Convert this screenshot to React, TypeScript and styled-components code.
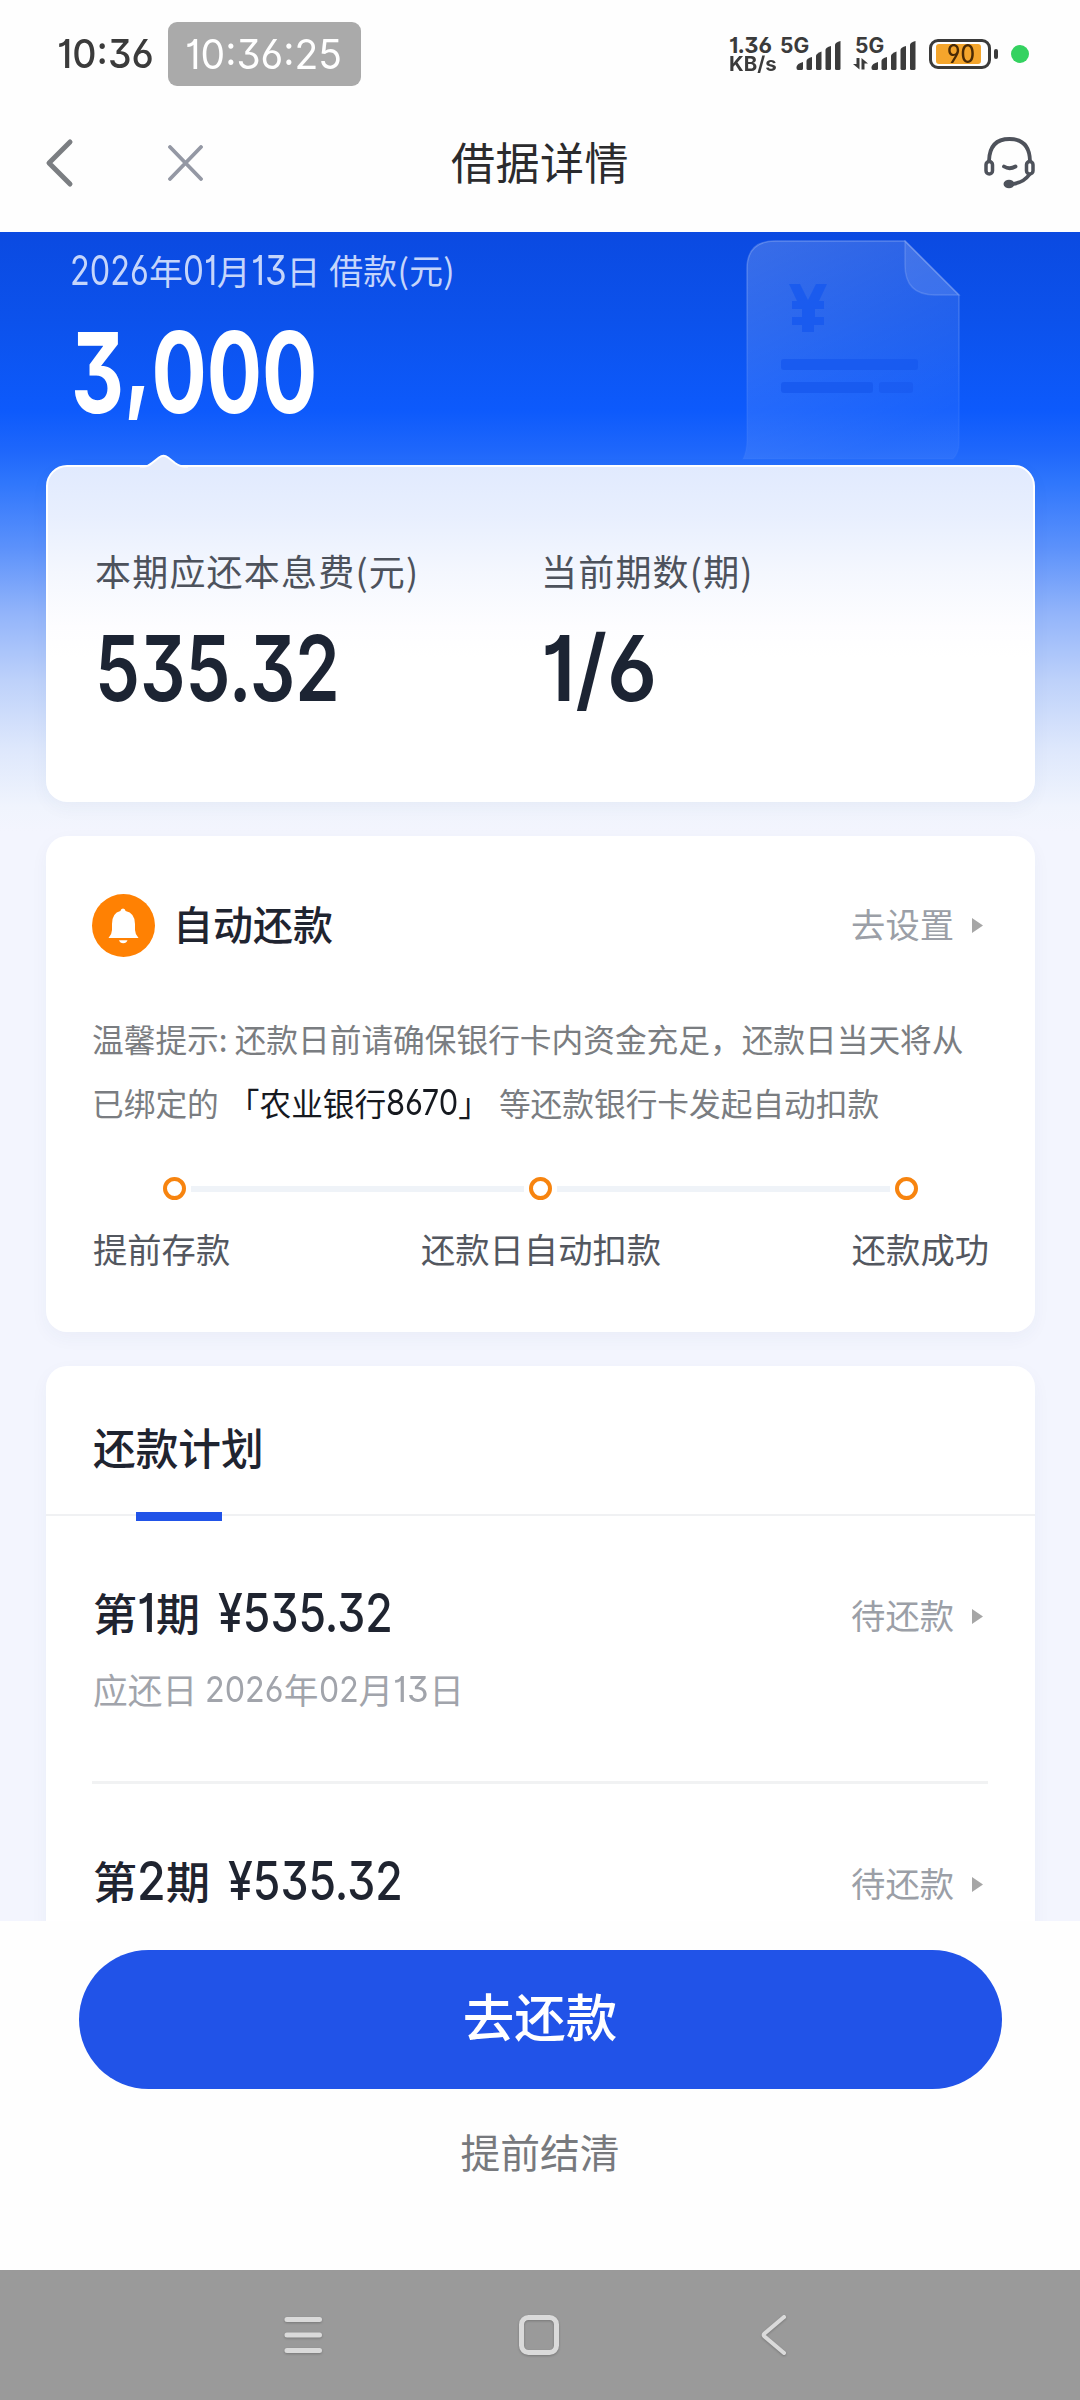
import React, { useLayoutEffect, useRef, useState } from "react";
import styled, { createGlobalStyle } from "styled-components";

const cjk = `"Noto Sans CJK SC", "Noto Sans", sans-serif`;
const latin = `Inter, Roboto, "Liberation Sans", sans-serif`;

const GlobalStyle = createGlobalStyle`
  html, body { margin: 0; padding: 0; background: #fefefe; }
  *, *::before, *::after { box-sizing: border-box; }
  body { font-family: ${cjk}; -webkit-font-smoothing: antialiased; }
  button { font: inherit; border: 0; padding: 0; background: none; cursor: pointer; }
  svg { display: block; flex: none; }
`;

/* ---------- condensed numerals ---------- */

const NumBox = styled.span<{ $w: number; $size: number; $weight: number }>`
  display: inline-block;
  flex: none;
  width: ${(p) => p.$w}px;
  height: ${(p) => p.$size * 0.73}px;
  line-height: ${(p) => p.$size * 0.73}px;
  font-family: ${latin};
  font-size: ${(p) => p.$size}px;
  font-weight: ${(p) => p.$weight};
  font-feature-settings: "cv01", "cv03", "cv04", "cv09";
  white-space: pre;
`;

const NumInk = styled.span`
  display: inline-block;
  transform-origin: 0 50%;
`;

const Comma = styled.span`
  display: inline-block;
  transform: translateY(-15px);
`;

interface NumProps {
  width: number;
  size: number;
  weight?: number;
  children: React.ReactNode;
}

/** Numerals squeezed horizontally to an exact advance width. */
function Num({ width, size, weight = 400, children }: NumProps) {
  const ink = useRef<HTMLSpanElement>(null);
  const [scale, setScale] = useState(1);
  useLayoutEffect(() => {
    if (ink.current) setScale(width / ink.current.offsetWidth);
  }, [width, children]);
  return (
    <NumBox $w={width} $size={size} $weight={weight}>
      <NumInk ref={ink} style={{ transform: `scaleX(${scale})` }}>
        {children}
      </NumInk>
    </NumBox>
  );
}

/* ---------- screen ---------- */

const Screen = styled.div`
  width: 1080px;
  height: 2400px;
  display: flex;
  flex-direction: column;
  overflow: hidden;
  background: #fefefe;
`;

const StatusBar = styled.header`
  height: 108px;
  flex: none;
  display: flex;
  align-items: center;
  padding: 0 51px 0 57px;
  color: #3b3b3b;
`;

const ClockPill = styled.div`
  margin-left: 14px;
  width: 193px;
  height: 64px;
  border-radius: 9px;
  background: #aaaaaa;
  color: #fff;
  display: flex;
  align-items: center;
  justify-content: center;
  padding: 2px 2px 0 0;
`;

const StatusRight = styled.div`
  margin-left: auto;
  display: flex;
  align-items: center;
`;

const Speed = styled.div`
  display: flex;
  flex-direction: column;
  gap: 4px;
  width: 51px;
`;

const Signal = styled.div<{ $ml?: number }>`
  position: relative;
  width: 61px;
  height: 32px;
  margin-left: ${(p) => p.$ml ?? 0}px;
  display: flex;
  align-items: flex-end;
  justify-content: flex-end;
`;

const SignalLabel = styled.span`
  position: absolute;
  left: 0;
  top: 0;
  line-height: 0;
`;

const Battery = styled.div`
  width: 62px;
  height: 30px;
  margin-left: 13px;
  border: 3px solid #3b3b3b;
  border-radius: 9px;
  padding: 2px 4px;
  display: flex;
`;

const Charge = styled.div`
  width: 45px;
  height: 20px;
  border-radius: 3px;
  background: #f4a52c;
  color: #4a2a05;
  display: flex;
  align-items: center;
  justify-content: flex-end;
  padding-right: 6px;
`;

const BatteryNub = styled.div`
  width: 4px;
  height: 10px;
  margin-left: 3px;
  border-radius: 2px;
  background: #3b3b3b;
`;

const LiveDot = styled.div`
  width: 18px;
  height: 18px;
  margin-left: 13px;
  border-radius: 50%;
  background: #34d260;
`;

const TitleBar = styled.nav`
  height: 124px;
  flex: none;
  display: grid;
  grid-template-columns: 1fr auto 1fr;
  align-items: center;
  padding: 0 45px 15px 45px;
`;

const TitleActions = styled.div<{ $end?: boolean }>`
  display: flex;
  align-items: center;
  gap: 94px;
  justify-content: ${(p) => (p.$end ? "flex-end" : "flex-start")};
`;

const Title = styled.h1`
  margin: 0;
  padding-bottom: 4px;
  font-size: 44px;
  line-height: 60px;
  letter-spacing: 0.5px;
  font-weight: 400;
  color: #2b2b2d;
`;

const Content = styled.main`
  height: 1689px;
  flex: none;
  overflow: hidden;
  padding: 0 45px 0 46px;
  background: linear-gradient(
      180deg,
      #0b4ae1 0px,
      #0c52ec 90px,
      #0d5afc 178px,
      #2068fb 222px,
      #2f76fc 250px,
      #5b91fb 315px,
      #92b4fa 381px,
      #bdd1fa 448px,
      #dde7fc 515px,
      #f0f4fd 575px,
      #f3f5fe 600px
    )
    no-repeat;
`;

const Hero = styled.section`
  height: 233px;
  display: flex;
  justify-content: space-between;
  padding: 8px 74px 0 24px;
`;

const HeroDate = styled.div`
  margin-top: 12px;
  height: 38px;
  line-height: 36px;
  font-size: 33.8px;
  color: #c5d5fb;
  white-space: pre;
  display: flex;
  align-items: center;
`;

const HeroCaption = styled.span`
  margin-left: 1px;
  height: 38px;
  letter-spacing: 0.3px;
`;

const HeroAmount = styled.div`
  margin: 42px 0 0 1px;
  height: 82px;
  line-height: 0;
  color: #fff;
`;

const shadow = `0 6px 18px rgba(40, 60, 110, 0.045)`;

const SummaryCard = styled.section`
  position: relative;
  height: 337px;
  border-radius: 21px;
  border: 2px solid #fff;
  background: linear-gradient(180deg, #e1eafe 0px, #e8effe 50px, #f4f7fe 105px, #fdfdff 160px, #fff 190px);
  box-shadow: ${shadow};
  padding: 79px 0 0 47px;
  display: grid;
  grid-template-columns: 446px 1fr;
  align-content: start;
`;

const Notch = styled.svg`
  position: absolute;
  left: 92px;
  top: -13px;
`;

const SummaryLabel = styled.div`
  height: 48px;
  line-height: 48px;
  font-size: 36px;
  letter-spacing: 1.2px;
  color: #4d525c;
  white-space: nowrap;
`;

const SummaryValue = styled.div`
  margin-top: 41px;
  height: 66px;
  line-height: 0;
  color: #1c2433;
`;

const Card = styled.section<{ $h: number }>`
  height: ${(p) => p.$h}px;
  margin-top: 34px;
  border-radius: 21px;
  background: #fff;
  box-shadow: ${shadow};
  display: flex;
  flex-direction: column;
`;

const CardHead = styled.div`
  display: flex;
  align-items: center;
  height: 64px;
  margin: 57px 47px 0 46px;
`;

const CardTitle = styled.h2`
  margin: 0 0 0 18px;
  font-size: 40px;
  line-height: 64px;
  height: 68px;
  font-weight: 500;
  color: #1f2430;
`;

const LinkAction = styled.button<{ $drop?: number }>`
  margin-left: auto;
  display: flex;
  align-items: center;
  gap: 18px;
  padding-right: 5px;
  padding-top: ${(p) => p.$drop ?? 0}px;
  font-size: 34.3px;
  font-weight: 400;
  line-height: 50px;
  color: #9b9fa7;
`;

const LinkText = styled.span`
  margin-top: -4px;
`;

const Hint = styled.div`
  margin: 49px 46px 0 46px;
  font-size: 31.7px;
  line-height: 64px;
  color: #7a7d81;
  white-space: nowrap;
`;

const HintLine = styled.p`
  display: flex;
  align-items: center;
  height: 64px;
  margin: 0;
  white-space: pre;
`;

const BankName = styled.span<{ $l: number; $r: number }>`
  display: flex;
  align-items: center;
  color: #16191f;
  margin: 0 ${(p) => p.$r}px 0 ${(p) => p.$l}px;
`;

const Track = styled.div`
  height: 23px;
  margin: 43px 117px 0;
  display: flex;
  align-items: center;
  gap: 5px;
`;

const TrackDot = styled.span`
  width: 23px;
  height: 23px;
  flex: none;
  border: 4.5px solid #f7840f;
  border-radius: 50%;
  background: #fff;
`;

const TrackLine = styled.span`
  flex: 1;
  height: 6px;
  background: #eff3f8;
`;

const TrackLabels = styled.div`
  display: flex;
  justify-content: space-between;
  margin: 23px 46px 0 47px;
  font-size: 34.3px;
  line-height: 50px;
  color: #53575f;
`;

const PlanTab = styled.div`
  height: 150px;
  flex: none;
  border-bottom: 2px solid #f0f1f3;
  display: flex;
  flex-direction: column;
  justify-content: space-between;
  padding: 48px 46px 0 47px;
`;

const PlanTitle = styled.h2`
  margin: 0;
  font-size: 42.7px;
  line-height: 64px;
  font-weight: 500;
  color: #1f2430;
`;

const TabMark = styled.div`
  width: 86px;
  height: 9px;
  margin: 0 0 -7px 43px;
  background: #2153e8;
`;

const PlanRow = styled.article`
  height: 268px;
  flex: none;
  margin: 0 47px 0 46px;
  padding-top: 65px;
  border-bottom: 3px solid #f1f2f3;
`;

const PlanMain = styled.div`
  display: flex;
  align-items: center;
  height: 64px;
  font-size: 44px;
  font-weight: 500;
  color: #1f2430;
`;

const Term = styled.span`
  display: flex;
  align-items: center;
  line-height: 62px;
  margin: 0 18px 0 1px;
`;

const TermText = styled.span`
  margin-top: -3px;
`;

const PlanDue = styled.div`
  margin: 21px 0 0 1px;
  height: 46px;
  line-height: 46px;
  display: flex;
  align-items: center;
  font-size: 34.7px;
  white-space: pre;
  color: #a1a4ab;
`;

const Footer = styled.footer`
  height: 349px;
  flex: none;
  padding-top: 29px;
  display: flex;
  flex-direction: column;
  align-items: center;
  background: #fefefe;
`;

const PrimaryButton = styled.button`
  width: 923px;
  height: 139px;
  border-radius: 70px;
  background: #2153e8;
  color: #fff;
  font-size: 51.5px;
  line-height: 130px;
  padding-bottom: 9px;
  font-weight: 500;
`;

const TextButton = styled.button`
  margin-top: 32px;
  font-size: 39.8px;
  line-height: 60px;
  color: #77797d;
`;

const SystemNav = styled.div`
  flex: 1;
  background: #9a9a9a;
  display: flex;
  align-items: flex-start;
  padding: 40px 0 0 280px;
  gap: 189px;
`;

/* ---------- drawings ---------- */

const Bars = () => (
  <svg width="45" height="29" viewBox="0 0 45 29" fill="#3b3b3b">
    <path d="M0.500 27V26Q1 22.500 7 21V27.500Q7 29 5.500 29H2Q0.500 29 0.500 27Z" />
    <path d="M10.500 20Q10.500 17.500 16 16V27.500Q16 29 14.500 29H12Q10.500 29 10.500 27.500Z" />
    <path d="M20 15Q20 12.500 25.500 10.500V27.500Q25.500 29 24 29H21.500Q20 29 20 27.500Z" />
    <path d="M29.500 9Q29.500 6.500 35 5V27.500Q35 29 33.500 29H31Q29.500 29 29.500 27.500Z" />
    <path d="M39 4Q39 1.500 44.500 0V27.500Q44.500 29 43 29H40.500Q39 29 39 27.500Z" />
  </svg>
);

const DataArrows = () => (
  <svg width="18" height="12" viewBox="0 0 18 12" fill="#3b3b3b">
    <path d="M3.500 0H6.500V11.500L0 6H3.500Z" />
    <path d="M8.500 0L15 5.500H11.500V11.500H8.500Z" />
  </svg>
);

const Headset = () => (
  <svg width="51" height="52" viewBox="0 0 51 52" fill="none" stroke="#4e525b" strokeWidth="3.800" strokeLinecap="round">
    <path d="M5 24Q5.500 2 25.500 2T46 24" />
    <rect x="2" y="24.500" width="6.500" height="12.500" rx="3.250" strokeWidth="3.500" />
    <rect x="42.500" y="24.500" width="6.500" height="12.500" rx="3.250" strokeWidth="3.500" />
    <path d="M20 29.500Q25.500 33 31.500 29.500" />
    <path d="M45 38Q40 45 29 47" />
    <ellipse cx="25" cy="47" rx="3.600" ry="2.400" fill="#4e525b" />
  </svg>
);

const Document = () => (
  <svg width="219" height="220" viewBox="0 0 219 220">
    <defs>
      <linearGradient id="paper" x1="0" y1="0" x2="0.5" y2="1">
        <stop offset="0" stopColor="#fff" stopOpacity="0.19" />
        <stop offset="0.6" stopColor="#fff" stopOpacity="0.1" />
        <stop offset="1" stopColor="#fff" stopOpacity="0.05" />
      </linearGradient>
      <linearGradient id="edge" x1="0" y1="0" x2="0" y2="1">
        <stop offset="0" stopColor="#fff" stopOpacity="0.22" />
        <stop offset="1" stopColor="#fff" stopOpacity="0.02" />
      </linearGradient>
    </defs>
    <path
      d="M5 29Q5 1 33 1H163L217 55V203Q217 213 211 219H1Q5 211 5 200Z"
      fill="url(#paper)"
      stroke="url(#edge)"
      strokeWidth="1.500"
    />
    <path d="M163 1V25Q163 55 193 55H217Z" fill="#fff" fillOpacity="0.1" stroke="#fff" strokeOpacity="0.14" strokeWidth="1.500" />
    <g fill="#1759ee">
      <rect x="39" y="119" width="137" height="11" rx="3" opacity="0.85" />
      <rect x="39" y="142" width="92" height="11" rx="3" opacity="0.85" />
      <rect x="137" y="142" width="34" height="11" rx="3" opacity="0.6" />
    </g>
    <path
      d="M47 44H58L66 60L74 44H85L77 61H82V69H73V77H82V85H72V92H60V85H50V77H60V69H50V61H55Z"
      fill="#1759ee"
      fillOpacity="0.85"
    />
  </svg>
);

const Bell = () => (
  <svg width="63" height="63" viewBox="0 0 63 63">
    <circle cx="31.500" cy="31.500" r="31.500" fill="#ff8103" />
    <path
      d="M31 14.500Q33.200 14.500 33.600 17Q43 19 43 30V36Q43 40 46.500 44H16.500Q20 40 20 36V30Q20 19 28.400 17Q28.800 14.500 31 14.500Z"
      fill="#fff"
    />
    <path d="M27 46.200H35.500Q34.500 49.200 31.200 49.200Q28 49.200 27 46.200Z" fill="#fff" />
  </svg>
);

const Caret = () => (
  <svg width="11" height="15" viewBox="0 0 11 15">
    <path d="M0 0L11 7.500L0 15Z" fill="#a6a6a6" />
  </svg>
);

const BackIcon = () => (
  <svg width="29" height="50" viewBox="0 0 29 50" fill="none" stroke="#7b7e82" strokeWidth="5" strokeLinecap="round" strokeLinejoin="round">
    <path d="M25 4L4 25L25 46" />
  </svg>
);

const CloseIcon = () => (
  <svg width="35" height="36" viewBox="0 0 35 36" fill="none" stroke="#9498a4" strokeWidth="3.800" strokeLinecap="round">
    <path d="M2 2L33 34M33 2L2 34" />
  </svg>
);

const SysIcon = styled.svg`
  filter: drop-shadow(0 1px 1px rgba(0, 0, 0, 0.22));
`;

/* ---------- page ---------- */

const plans = [
  { no: "1", noWidth: 19, due: true },
  { no: "2", noWidth: 29, due: false },
];

export default function App() {
  return (
    <Screen>
      <GlobalStyle />
      <StatusBar>
        <Num width={97} size={39.5} weight={500}>10:36</Num>
        <ClockPill>
          <Num width={157} size={41}>10:36:25</Num>
        </ClockPill>
        <StatusRight>
          <Speed>
            <Num width={43} size={22} weight={700}>1.36</Num>
            <Num width={48} size={20} weight={700}>KB/s</Num>
          </Speed>
          <Signal>
            <SignalLabel><Num width={29} size={21} weight={700}>5G</Num></SignalLabel>
            <Bars />
          </Signal>
          <Signal $ml={14}>
            <SignalLabel><Num width={29} size={21} weight={700}>5G</Num></SignalLabel>
            <DataArrows />
            <Bars />
          </Signal>
          <Battery>
            <Charge><Num width={28} size={25} weight={500}>90</Num></Charge>
          </Battery>
          <BatteryNub />
          <LiveDot />
        </StatusRight>
      </StatusBar>

      <TitleBar>
        <TitleActions>
          <BackIcon />
          <CloseIcon />
        </TitleActions>
        <Title>借据详情</Title>
        <TitleActions $end>
          <Headset />
        </TitleActions>
      </TitleBar>

      <Content>
        <Hero>
          <div>
            <HeroDate>
              <Num width={79} size={41}>2026</Num>年<Num width={34} size={41}>01</Num>月
              <Num width={36} size={41}>13</Num>日<HeroCaption> 借款(元)</HeroCaption>
            </HeroDate>
            <HeroAmount>
              <Num width={246} size={112} weight={700}>3<Comma>,</Comma>000</Num>
            </HeroAmount>
          </div>
          <Document />
        </Hero>

        <SummaryCard>
          <Notch width="48" height="16" viewBox="0 0 48 16">
            <path d="M0 12.500H4Q8 12.500 12 9L19 3.500Q23.500 0 28 3.500L35 9Q40 12.500 44 12.500H48V16H0Z" fill="#e4ebfc" />
            <path d="M0 12.500H4Q8 12.500 12 9L19 3.500Q23.500 0 28 3.500L35 9Q40 12.500 44 12.500H48" fill="none" stroke="#fff" strokeWidth="2" />
          </Notch>
          <div>
            <SummaryLabel>本期应还本息费(元)</SummaryLabel>
            <SummaryValue><Num width={245} size={91} weight={600}>535.32</Num></SummaryValue>
          </div>
          <div>
            <SummaryLabel>当前期数(期)</SummaryLabel>
            <SummaryValue><Num width={116} size={91} weight={600}>1/6</Num></SummaryValue>
          </div>
        </SummaryCard>

        <Card $h={496}>
          <CardHead>
            <Bell />
            <CardTitle>自动还款</CardTitle>
            <LinkAction><LinkText>去设置</LinkText><Caret /></LinkAction>
          </CardHead>
          <Hint>
            <HintLine>温馨提示: 还款日前请确保银行卡内资金充足，还款日当天将从</HintLine>
            <HintLine>
              已绑定的
              <BankName $l={9} $r={9}>「农业银行<Num width={72} size={36}>8670</Num>」</BankName>
              等还款银行卡发起自动扣款
            </HintLine>
          </Hint>
          <Track>
            <TrackDot />
            <TrackLine />
            <TrackDot />
            <TrackLine />
            <TrackDot />
          </Track>
          <TrackLabels>
            <span>提前存款</span>
            <span>还款日自动扣款</span>
            <span>还款成功</span>
          </TrackLabels>
        </Card>

        <Card $h={700}>
          <PlanTab>
            <PlanTitle>还款计划</PlanTitle>
            <TabMark />
          </PlanTab>
          {plans.map((p) => (
            <PlanRow key={p.no}>
              <PlanMain>
                <Term>
                  <TermText>第</TermText>
                  <Num width={p.noWidth} size={53} weight={500}>{p.no}</Num>
                  <TermText>期</TermText>
                </Term>
                <Num width={175} size={53} weight={500}>¥535.32</Num>
                <LinkAction $drop={6}><LinkText>待还款</LinkText><Caret /></LinkAction>
              </PlanMain>
              {p.due && (
                <PlanDue>
                  应还日 <Num width={79} size={36}>2026</Num>年<Num width={40} size={36}>02</Num>月
                  <Num width={36} size={36}>13</Num>日
                </PlanDue>
              )}
            </PlanRow>
          ))}
        </Card>
      </Content>

      <Footer>
        <PrimaryButton>去还款</PrimaryButton>
        <TextButton>提前结清</TextButton>
      </Footer>

      <SystemNav>
        <SysIcon width="46" height="50" viewBox="0 0 46 50" stroke="#dadada" strokeWidth="5" strokeLinecap="round">
          <path d="M7 9.500H39.500M7 25H39.500M7 40.500H39.500" />
        </SysIcon>
        <SysIcon width="50" height="50" viewBox="0 0 50 50" fill="none" stroke="#dadada" strokeWidth="5">
          <rect x="6.500" y="7.500" width="35" height="35" rx="7" />
        </SysIcon>
        <SysIcon width="40" height="50" viewBox="0 0 40 50" fill="none" stroke="#dadada" strokeWidth="4" strokeLinecap="round" strokeLinejoin="round">
          <path d="M30 7L10.500 23.500Q9 25 10.500 26.500L30 43" />
        </SysIcon>
      </SystemNav>
    </Screen>
  );
}
